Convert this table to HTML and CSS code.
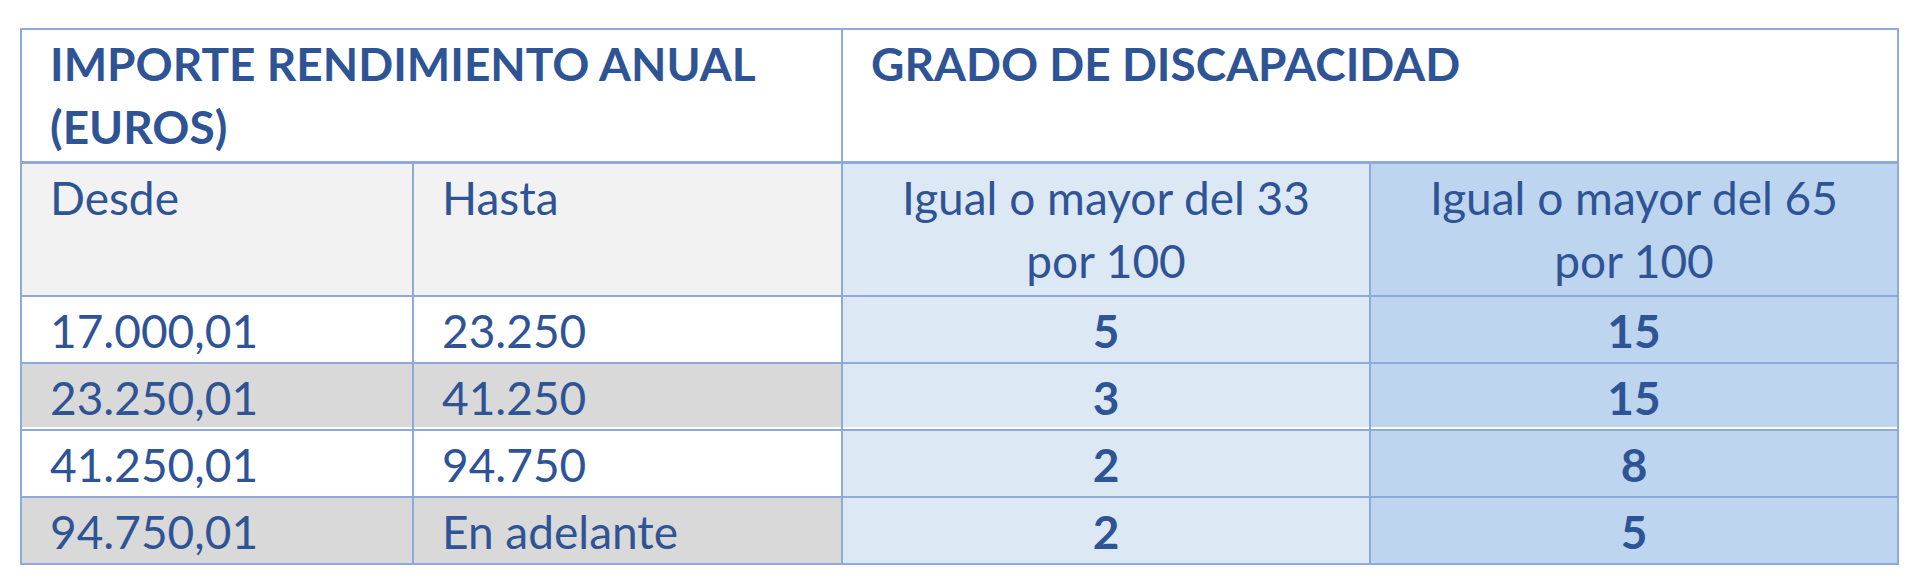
FILE: index.html
```html
<!DOCTYPE html>
<html lang="es">
<head>
<meta charset="utf-8">
<title>Tabla discapacidad</title>
<link rel="stylesheet" href="styles.css">
</head>
<body>
<div class="page">
  <table class="grid">
    <colgroup>
      <col class="c1">
      <col class="c2">
      <col class="c3">
      <col class="c4">
    </colgroup>
    <tr class="head">
      <th colspan="2">IMPORTE RENDIMIENTO ANUAL<br>(EUROS)</th>
      <th colspan="2">GRADO DE DISCAPACIDAD</th>
    </tr>
    <tr class="sub">
      <td class="l">Desde</td>
      <td class="l">Hasta</td>
      <td class="b3">Igual o mayor del 33<br>por 100</td>
      <td class="b4">Igual o mayor del 65<br>por 100</td>
    </tr>
    <tr class="row">
      <td class="l">17.000,01</td>
      <td class="l">23.250</td>
      <td class="b3 num">5</td>
      <td class="b4 num">15</td>
    </tr>
    <tr class="row gray gap">
      <td class="l">23.250,01</td>
      <td class="l">41.250</td>
      <td class="b3 num">3</td>
      <td class="b4 num">15</td>
    </tr>
    <tr class="row">
      <td class="l">41.250,01</td>
      <td class="l">94.750</td>
      <td class="b3 num">2</td>
      <td class="b4 num">8</td>
    </tr>
    <tr class="row gray">
      <td class="l">94.750,01</td>
      <td class="l">En adelante</td>
      <td class="b3 num">2</td>
      <td class="b4 num">5</td>
    </tr>
  </table>
</div>
</body>
</html>
```
FILE: styles.css
```css
html, body {
  margin: 0;
  padding: 0;
  background: #ffffff;
}
.page {
  padding: 28px 0 0 20px;
}
.grid {
  border-collapse: collapse;
  table-layout: fixed;
  width: 1877px;
  font-family: Lato, "Noto Sans", sans-serif;
  font-size: 46px;
  line-height: 63px;
  color: #2f5496;
}
.c1 { width: 392px; }
.c2 { width: 429px; }
.c3 { width: 528px; }
.c4 { width: 528px; }
.grid th,
.grid td {
  border: 2px solid #8eaadb;
  padding: 2px 0 0 0;
  vertical-align: top;
}
.head th {
  height: 133px;
  box-sizing: border-box;
  text-align: left;
  font-weight: 700;
  padding-left: 28px;
  border-bottom: 3px solid #8eaadb;
  background: #ffffff;
}
.sub td {
  height: 134px;
  box-sizing: border-box;
  background: #f2f2f2;
}
.row td {
  height: 66px;
  box-sizing: border-box;
  background: #ffffff;
}
.row.gray td {
  background: #d9d9d9;
}
.row.gap td {
  box-shadow: inset 0 -2px 0 #ffffff;
}
.l {
  text-align: left;
  padding-left: 28px !important;
}
.grid td.b3 {
  background: #dde8f5;
  text-align: center;
}
.grid td.b4 {
  background: #bdd5ee;
  text-align: center;
}
.num {
  font-weight: 700;
}
```
